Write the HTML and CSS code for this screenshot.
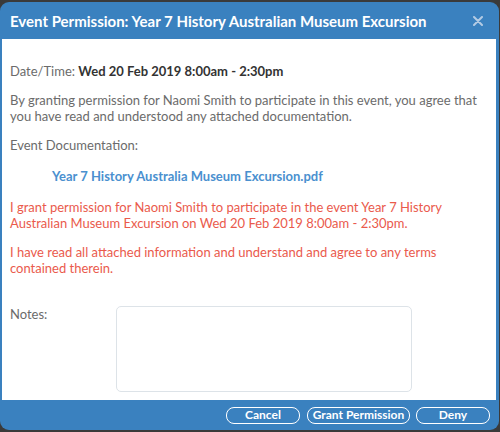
FILE: index.html
```html
<!DOCTYPE html>
<html>
<head>
<meta charset="utf-8">
<link rel="stylesheet" href="styles.css">
</head>
<body>
<div class="dialog">
  <div class="header">
    <div class="title">Event Permission: Year 7 History Australian Museum Excursion</div>
    <svg class="close" width="10" height="10" viewBox="0 0 10 10"><path d="M1 1L9 9M9 1L1 9" stroke="#b3cbe4" stroke-width="2" stroke-linecap="round"/></svg>
  </div>
  <div class="body">
    <p class="date">Date/Time: <b>Wed 20 Feb 2019 8:00am - 2:30pm</b></p>
    <p class="intro">By granting permission for Naomi Smith to participate in this event, you agree that you have read and understood any attached documentation.</p>
    <p class="doclabel">Event Documentation:</p>
    <a class="doc">Year 7 History Australia Museum Excursion.pdf</a>
    <p class="red">I grant permission for Naomi Smith to participate in the event Year 7 History Australian Museum Excursion on Wed 20 Feb 2019 8:00am - 2:30pm.</p>
    <p class="red">I have read all attached information and understand and agree to any terms contained therein.</p>
    <div class="notes">
      <label>Notes:</label>
      <textarea></textarea>
    </div>
  </div>
  <div class="footer">
    <button class="btn cancel">Cancel</button>
    <button class="btn grant">Grant Permission</button>
    <button class="btn deny">Deny</button>
  </div>
</div>
</body>
</html>
```
FILE: styles.css
```css
html, body {
  margin: 0;
  padding: 0;
  background: #3a3a3a;
  width: 500px;
  height: 432px;
  overflow: hidden;
}
body {
  font-family: Lato, "Liberation Sans", sans-serif;
}
.dialog {
  margin: 2px 1px 0 0;
  width: 499px;
  height: 428px;
  background: #3a81bf;
  border-radius: 9px;
  display: flex;
  flex-direction: column;
  overflow: hidden;
}
.header {
  height: 37px;
  display: flex;
  align-items: center;
  justify-content: space-between;
  padding: 0 16px 0 10px;
  flex: none;
}
.title {
  color: #fff;
  font-weight: bold;
  font-size: 15px;
}
.close {
  display: block;
}
.body {
  background: #fff;
  margin: 0 3px 0 2px;
  height: 361px;
  flex: none;
  box-sizing: border-box;
  padding: 24px 8px 0 8px;
  color: #6b6b6b;
  font-size: 13px;
  line-height: 16px;
}
.body p {
  margin: 0 0 13px 0;
}
.body p.doclabel {
  margin-bottom: 0;
}
.date b {
  color: #333;
  font-weight: bold;
}
.doc {
  display: block;
  color: #4a90cf;
  font-weight: bold;
  font-size: 13px;
  line-height: 16px;
  padding-left: 42px;
  margin: 15px 0 15px 0;
}
.red {
  color: #ea5a4c;
}
.notes {
  display: flex;
  margin-top: 30px;
  align-items: flex-start;
}
.notes label {
  width: 106px;
}
.notes textarea {
  width: 296px;
  height: 86px;
  box-sizing: border-box;
  border: 1px solid #dde3e8;
  border-radius: 5px;
  resize: none;
  margin: 0;
}
.footer {
  flex: 1;
  display: flex;
  justify-content: flex-end;
  align-items: center;
  gap: 6px;
  padding-right: 9px;
}
.btn {
  font-family: Lato, "Liberation Sans", sans-serif;
  background: transparent;
  color: #fff;
  font-weight: bold;
  font-size: 12px;
  border: 1.5px solid #fff;
  border-radius: 8px;
  height: 17px;
  padding: 0;
  line-height: 14px;
}
.cancel { width: 74px; margin-right: 1px; }
.grant { width: 103px; }
.deny { width: 74px; }
```
